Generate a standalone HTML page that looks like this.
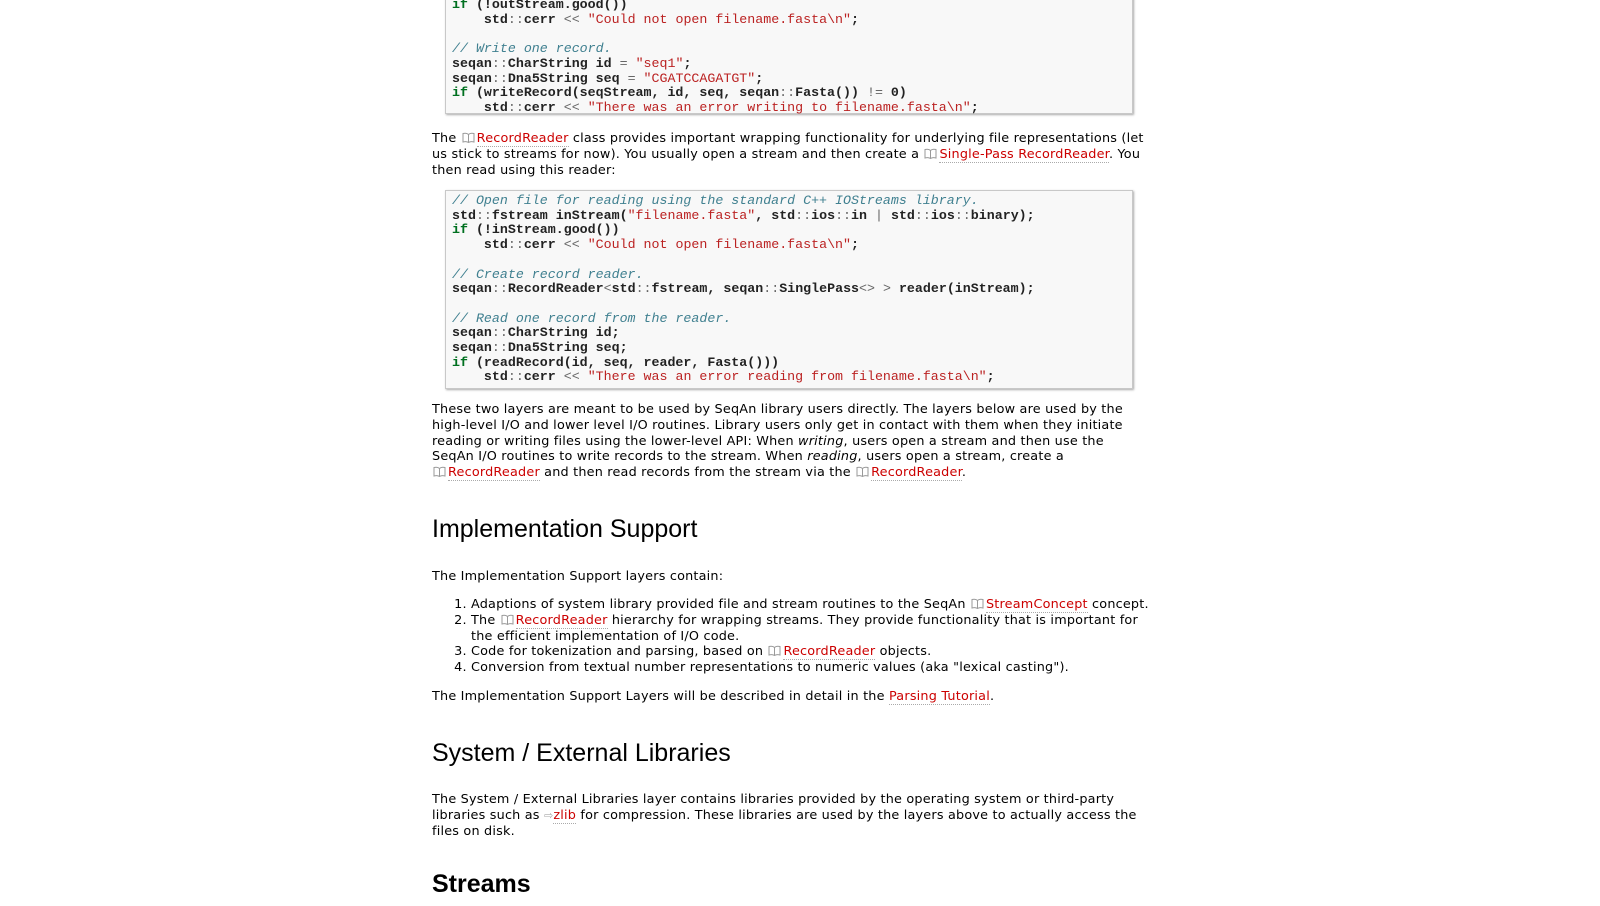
<!DOCTYPE html>
<html><head><style>
body{margin:0;width:1600px;height:906px;overflow:hidden;background:#fff;font-family:"DejaVu Sans","Liberation Sans",sans-serif;font-size:12.8px;letter-spacing:0.2px;color:#000}
.b{position:absolute;left:432px;width:724px;line-height:15.8px}
pre{position:absolute;left:445px;margin:0;background:#f8f8f8;border:1px solid #c8c8c8;box-shadow:1px 1px 2px #aaa;padding:3px 0 3px 6px;font-family:"Liberation Mono",monospace;font-size:13.3px;letter-spacing:0;line-height:14.7px;color:#222;font-weight:bold;width:680px}
.k{color:#007020}.s{color:#b22;font-weight:normal}.c{color:#408090;font-style:italic;font-weight:normal}.o{color:#666;font-weight:normal}
a{color:#c00;text-decoration:none;border-bottom:1px dotted #aaa}
svg.i{width:13px;height:11px;vertical-align:-1px;margin:0 2px 0 1px}
h2{position:absolute;left:432px;margin:0;font-family:"Liberation Sans",sans-serif;font-weight:normal;font-size:25px;letter-spacing:0}
ol{margin:0;padding-left:39px}
</style></head><body>
<svg width="0" height="0" style="position:absolute"><defs><symbol id="bk" viewBox="0 0 13 11"><path d="M6.5 2.5C5 1 3 1 1 1.5V10C3 9.5 5 9.5 6.5 10.5C8 9.5 10 9.5 12 10V1.5C10 1 8 1 6.5 2.5V10.5" fill="none" stroke="#999" stroke-width="1"/></symbol></defs></svg>
<pre style="top:-6px;height:112px"><span class="k">if</span> (!outStream.good())
    std<span class="o">::</span>cerr <span class="o">&lt;&lt;</span> <span class="s">"Could not open filename.fasta\n"</span>;

<span class="c">// Write one record.</span>
seqan<span class="o">::</span>CharString id <span class="o">=</span> <span class="s">"seq1"</span>;
seqan<span class="o">::</span>Dna5String seq <span class="o">=</span> <span class="s">"CGATCCAGATGT"</span>;
<span class="k">if</span> (writeRecord(seqStream, id, seq, seqan<span class="o">::</span>Fasta()) <span class="o">!=</span> 0)
    std<span class="o">::</span>cerr <span class="o">&lt;&lt;</span> <span class="s">"There was an error writing to filename.fasta\n"</span>;</pre>
<div class="b" style="top:131px">The <svg class="i"><use href="#bk"/></svg><a>RecordReader</a> class provides important wrapping functionality for underlying file representations (let us stick to streams for now). You usually open a stream and then create a <svg class="i"><use href="#bk"/></svg><a>Single-Pass RecordReader</a>. You then read using this reader:</div>
<pre style="top:190px;height:191px"><span class="c">// Open file for reading using the standard C++ IOStreams library.</span>
std<span class="o">::</span>fstream inStream(<span class="s">"filename.fasta"</span>, std<span class="o">::</span>ios<span class="o">::</span>in <span class="o">|</span> std<span class="o">::</span>ios<span class="o">::</span>binary);
<span class="k">if</span> (!inStream.good())
    std<span class="o">::</span>cerr <span class="o">&lt;&lt;</span> <span class="s">"Could not open filename.fasta\n"</span>;

<span class="c">// Create record reader.</span>
seqan<span class="o">::</span>RecordReader<span class="o">&lt;</span>std<span class="o">::</span>fstream, seqan<span class="o">::</span>SinglePass<span class="o">&lt;&gt;</span> <span class="o">&gt;</span> reader(inStream);

<span class="c">// Read one record from the reader.</span>
seqan<span class="o">::</span>CharString id;
seqan<span class="o">::</span>Dna5String seq;
<span class="k">if</span> (readRecord(id, seq, reader, Fasta()))
    std<span class="o">::</span>cerr <span class="o">&lt;&lt;</span> <span class="s">"There was an error reading from filename.fasta\n"</span>;</pre>
<div class="b" style="top:402px">These two layers are meant to be used by SeqAn library users directly. The layers below are used by the<br>high-level I/O and lower level I/O routines. Library users only get in contact with them when they initiate<br>reading or writing files using the lower-level API: When <i>writing</i>, users open a stream and then use the<br>SeqAn I/O routines to write records to the stream. When <i>reading</i>, users open a stream, create a<br><svg class="i"><use href="#bk"/></svg><a>RecordReader</a> and then read records from the stream via the <svg class="i"><use href="#bk"/></svg><a>RecordReader</a>.</div>
<h2 style="top:515px">Implementation Support</h2>
<div class="b" style="top:569px">The Implementation Support layers contain:</div>
<div class="b" style="top:597px;width:740px"><ol>
<li>Adaptions of system library provided file and stream routines to the SeqAn <svg class="i"><use href="#bk"/></svg><a>StreamConcept</a> concept.</li>
<li>The <svg class="i"><use href="#bk"/></svg><a>RecordReader</a> hierarchy for wrapping streams. They provide functionality that is important for<br>the efficient implementation of I/O code.</li>
<li>Code for tokenization and parsing, based on <svg class="i"><use href="#bk"/></svg><a>RecordReader</a> objects.</li>
<li>Conversion from textual number representations to numeric values (aka "lexical casting").</li></ol></div>
<div class="b" style="top:689px">The Implementation Support Layers will be described in detail in the <a>Parsing Tutorial</a>.</div>
<h2 style="top:739px">System / External Libraries</h2>
<div class="b" style="top:792px">The System / External Libraries layer contains libraries provided by the operating system or third-party<br>libraries such as <span style="color:#aaa;font-size:11px">&#x21E8;</span><a>zlib</a> for compression. These libraries are used by the layers above to actually access the<br>files on disk.</div>
<h2 style="top:870px;font-weight:bold">Streams</h2>
</body></html>
